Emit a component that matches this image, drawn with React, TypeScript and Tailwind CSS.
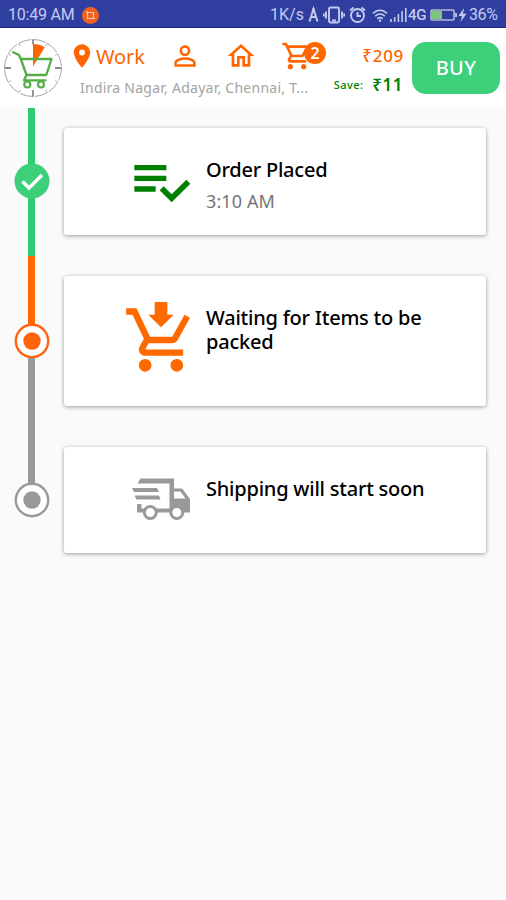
import type { ReactNode } from "react";
import { MdOutlineHome, MdOutlineShoppingCart, MdPersonOutline, MdPlace } from "react-icons/md";

function StatusBar() {
  return (
    <div className="flex h-7 items-center border-b border-[#1d2688] bg-[#303f9f] pl-2 pt-[3px] font-['Roboto',sans-serif] text-[16px] leading-none text-[#c3caf0]">
      <span className="w-[67px] whitespace-nowrap tracking-[-0.2px]">10:49 AM</span>
      <svg className="ml-[7px] h-[17px] w-[17px]" viewBox="0 0 17 17">
        <circle cx="8.5" cy="8.5" r="8.5" fill="#f4611e" />
        <path d="M4 5.5h7.5V12M5.5 4v7.5H13" fill="none" stroke="#f9c7ae" strokeWidth="1.2" />
      </svg>
      <span className="ml-[171px] w-[33px] whitespace-nowrap">1K/s</span>
      <svg className="ml-[5px] h-[18px] w-[11px]" viewBox="0 0 11 18" fill="none" stroke="currentColor">
        <path d="M1.500 15.500 5.500 3l4 12.500M3 11h5" strokeWidth="2" />
        <circle cx="5.500" cy="3.500" r="1.500" fill="currentColor" stroke="none" />
      </svg>
      <svg className="ml-[4px] h-[18px] w-[22px]" viewBox="0 0 22 18" fill="none" stroke="currentColor" strokeWidth="1.900">
        <rect x="6" y="1.500" width="10" height="15" rx="1.500" />
        <path d="M3 5.500v7M19 5.500v7M.8 7.500v3M21.200 7.500v3M9 14.500h4" />
      </svg>
      <svg className="ml-[4px] h-[18px] w-[17px]" viewBox="0 0 17 18" fill="none" stroke="currentColor" strokeWidth="1.900">
        <circle cx="8.500" cy="9.500" r="6.500" />
        <path d="M8.500 6v4H12M1 4.500l3.500-3M16 4.500l-3.500-3" />
      </svg>
      <svg className="ml-[6px] h-[15px] w-[16px]" viewBox="0 0 16 15" fill="none" stroke="currentColor" strokeWidth="1.600">
        <path d="M1 5.500c4-4.300 10-4.300 14 0M3.200 8.300c3-3 6.600-3 9.600 0M5.300 10.800c1.800-1.600 3.600-1.600 5.400 0" />
        <circle cx="8" cy="12.800" r="1.200" fill="currentColor" stroke="none" />
      </svg>
      <svg className="ml-[2px] h-[14px] w-[17px]" viewBox="0 0 17 14" stroke="currentColor" strokeWidth="1.600">
        <path d="M1 14v-3M4.700 14V9M8.400 14V6M12.100 14V3M15.800 14V0" />
      </svg>
      <span className="ml-px w-[19px] text-[15px] font-medium tracking-[-0.4px]">4G</span>
      <svg className="ml-[3px] h-[12px] w-[28px]" viewBox="0 0 28 12">
        <rect x="1" y="1" width="23" height="10" rx="1" fill="none" stroke="#b4b9d8" strokeWidth="1.600" />
        <path d="M2 2h10v8H2z" fill="#7cc67c" />
        <path d="M25 4h2v4h-2z" fill="#b4b9d8" />
      </svg>
      <svg className="h-[14px] w-[9px]" viewBox="0 0 9 14" fill="currentColor">
        <path d="M6 0 .5 8H4l-1.500 6L8.500 5.800H5z" />
      </svg>
      <span className="ml-[2px] text-[16px] tracking-[-0.4px]">36%</span>
    </div>
  );
}

function Logo() {
  return (
    <svg className="h-[60px] w-[60px] shrink-0" viewBox="0 0 60 60" fill="none">
      <circle cx="30" cy="30" r="28.500" stroke="#a6a6a6" strokeWidth="1" strokeDasharray="13 1.920" />
      <path d="M30 1.500v5M30 52v6.500M1.500 30H8M52 30h6.500" stroke="#666" strokeWidth="1.400" />
      <path
        d="M44.200 5.400 42.700 8M54.600 15.800 52 17.300M54.600 44.200 52 42.700M44.200 54.600 42.700 52M15.800 54.600l1.500-2.600M5.400 44.200 8 42.700M5.400 15.800 8 17.300M15.800 5.400l1.500 2.600"
        stroke="#aaa"
      />
      <path d="M30 6c4.500 0 8.500 1.200 11.800 3.200L30 28.500z" fill="#ff6500" />
      <path
        d="M10 14.200 16 17l2 4.500L23.500 37h19.800L48.500 21H18M23.500 37 21 42.300h21.500"
        stroke="#55ad45"
        strokeWidth="2.300"
        strokeLinecap="round"
        strokeLinejoin="round"
      />
      <circle cx="24.300" cy="46.500" r="3" stroke="#55ad45" strokeWidth="2.200" />
      <circle cx="38" cy="46.500" r="3" stroke="#55ad45" strokeWidth="2.200" />
    </svg>
  );
}

function Header() {
  return (
    <header className="flex h-20 bg-white pl-[3px] pr-[6px]">
      <div className="pt-[10px]">
        <Logo />
      </div>
      <div className="ml-[5px] w-[264px] text-[#ff6500]">
        <div className="flex h-[50px] items-start pt-3">
          <MdPlace className="mt-[2px] h-7 w-7 shrink-0" />
          <span className="w-[73px] text-[20px] leading-[34px] tracking-[-0.1px]">Work</span>
          <MdPersonOutline className="h-8 w-8 shrink-0" />
          <MdOutlineHome className="ml-6 h-8 w-8 shrink-0" />
          <div className="relative ml-6">
            <MdOutlineShoppingCart className="h-8 w-8" />
            <span className="absolute left-[23px] top-[2px] flex h-[22px] w-[22px] items-center justify-center rounded-full bg-[#ff6500] text-[16px] font-semibold leading-none text-white">
              2
            </span>
          </div>
        </div>
        <p className="whitespace-nowrap pl-3 text-[14px] leading-[19px] tracking-[0.25px] text-[#a3a3a3]">
          Indira Nagar, Adayar, Chennai, T...
        </p>
      </div>
      <div className="flex w-[72px] flex-col items-end text-[#ff6500]">
        <span className="pt-[18px] text-[17px] font-medium leading-5 tracking-[0.7px]">₹209</span>
        <div className="mt-[9px] flex items-center whitespace-nowrap text-[#008000]">
          <span className="mr-[9px] text-[11px] font-medium leading-5 tracking-[0.4px]">Save:</span>
          <span className="mr-px text-[17px] font-semibold leading-5 tracking-[0.5px]">₹11</span>
        </div>
      </div>
      <button
        className="ml-2 mt-[14px] h-[52px] w-[88px] rounded-[14px] bg-[#3ecf7a] text-[20px] font-medium tracking-[0.4px] text-white"
        type="button"
      >
        BUY
      </button>
    </header>
  );
}

function ChecklistIcon() {
  return (
    <svg className="h-16 w-16" viewBox="0 0 24 24" fill="#008000">
      <path d="M14 10H2v2h12v-2zm0-4H2v2h12V6zM2 16h8v-2H2v2zm19.500-4.500L23 13l-6.990 7-4.510-4.500L13 14l3.010 3 5.490-5.500z" />
    </svg>
  );
}

function PackingCart() {
  return (
    <svg className="h-[76px] w-[76px]" viewBox="0 0 24 24" fill="#ff6a00">
      <path d="M10 0h4v4h2l-4 4-4-4h2zM7 18c-1.100 0-1.990.9-1.990 2S5.900 22 7 22s2-.9 2-2-.9-2-2-2zm10 0c-1.100 0-1.990.9-1.990 2s.89 2 1.990 2 2-.9 2-2-.9-2-2-2zm-9.830-3.250.03-.12.9-1.630h7.450c.75 0 1.410-.41 1.750-1.030l3.860-7.010L19.420 4l-3.870 7H8.530L4.270 2H1v2h2l3.600 7.590-1.350 2.450c-.16.28-.25.61-.25.96 0 1.100.9 2 2 2h12v-2H7.420c-.13 0-.25-.11-.25-.25z" />
    </svg>
  );
}

function Truck() {
  return (
    <svg className="h-[44px] w-[60px]" viewBox="0 0 60 44" fill="#999">
      <path
        d="M6.500 6.500 9.500 1.500H43v10h8l8 10.500v13.500H6V27h4.500v4.500h28V6.500zM43 14.500v7h11.500l-5-7z"
        fillRule="evenodd"
      />
      <path d="M1 11h25l2 4H3zM3.500 18.500h24.500l1.500 4H5.500z" />
      <circle cx="19.300" cy="35.500" r="6" fill="white" stroke="#999" strokeWidth="3" />
      <circle cx="45.800" cy="35.500" r="6" fill="white" stroke="#999" strokeWidth="3" />
    </svg>
  );
}

function Dot({ className }: { className: string }) {
  return (
    <svg className={className} viewBox="0 0 36 36">
      <circle cx="18" cy="18" r="16.200" fill="white" stroke="currentColor" strokeWidth="2.400" />
      <circle cx="18" cy="18" r="8.700" fill="currentColor" />
    </svg>
  );
}

function Step({
  rail,
  icon,
  title,
  time,
  className,
}: {
  rail: ReactNode;
  icon: ReactNode;
  title: string;
  time?: string;
  className: string;
}) {
  return (
    <li className={`flex ${className}`}>
      <div className="flex w-[63px] shrink-0 flex-col items-center">{rail}</div>
      <div className="mb-[21px] ml-px mt-5 flex w-[422px] rounded-[3px] bg-white shadow-[0_1px_4px_rgba(0,0,0,0.38)]">
        <div className="w-[142px] shrink-0">{icon}</div>
        <div className="w-[240px] pt-[30px]">
          <h2 className="text-[20px] font-medium leading-6 tracking-[-0.22px] text-black">{title}</h2>
          {time && <p className="mt-[7px] text-[18px] leading-6 tracking-[0.1px] text-[#757575]">{time}</p>}
        </div>
      </div>
    </li>
  );
}

export default function App() {
  return (
    <div className="min-h-[900px] w-[506px] overflow-hidden bg-[#fafafa] font-['Noto_Sans',sans-serif]">
      <StatusBar />
      <Header />
      <ol>
        <Step
          className="h-[148px]"
          rail={
            <>
              <span className="h-14 w-[7px] bg-[#2ecc71]" />
              <svg className="-my-px h-9 w-9" viewBox="0 0 36 36">
                <circle cx="18" cy="18" r="17.500" fill="#3ecf7a" />
                <path d="m8.500 18.500 6.500 6.500L28 12" fill="none" stroke="white" strokeWidth="3.500" />
              </svg>
              <span className="w-[7px] flex-1 bg-[#2ecc71]" />
            </>
          }
          icon={
            <div className="ml-[65px] mt-[21px]">
              <ChecklistIcon />
            </div>
          }
          title="Order Placed"
          time="3:10 AM"
        />
        <Step
          className="h-[171px]"
          rail={
            <>
              <span className="h-[68px] w-[7px] bg-[#ff6a00]" />
              <Dot className="-my-px h-9 w-9 text-[#ff6310]" />
              <span className="w-[7px] flex-1 bg-[#999]" />
            </>
          }
          icon={
            <div className="ml-[59px] mt-[26px]">
              <PackingCart />
            </div>
          }
          title="Waiting for Items to be packed"
        />
        <Step
          className="h-[147px]"
          rail={
            <>
              <span className="h-14 w-[7px] bg-[#999]" />
              <Dot className="-my-px h-9 w-9 text-[#999]" />
            </>
          }
          icon={
            <div className="ml-[67px] mt-[30px]">
              <Truck />
            </div>
          }
          title="Shipping will start soon"
        />
      </ol>
    </div>
  );
}
